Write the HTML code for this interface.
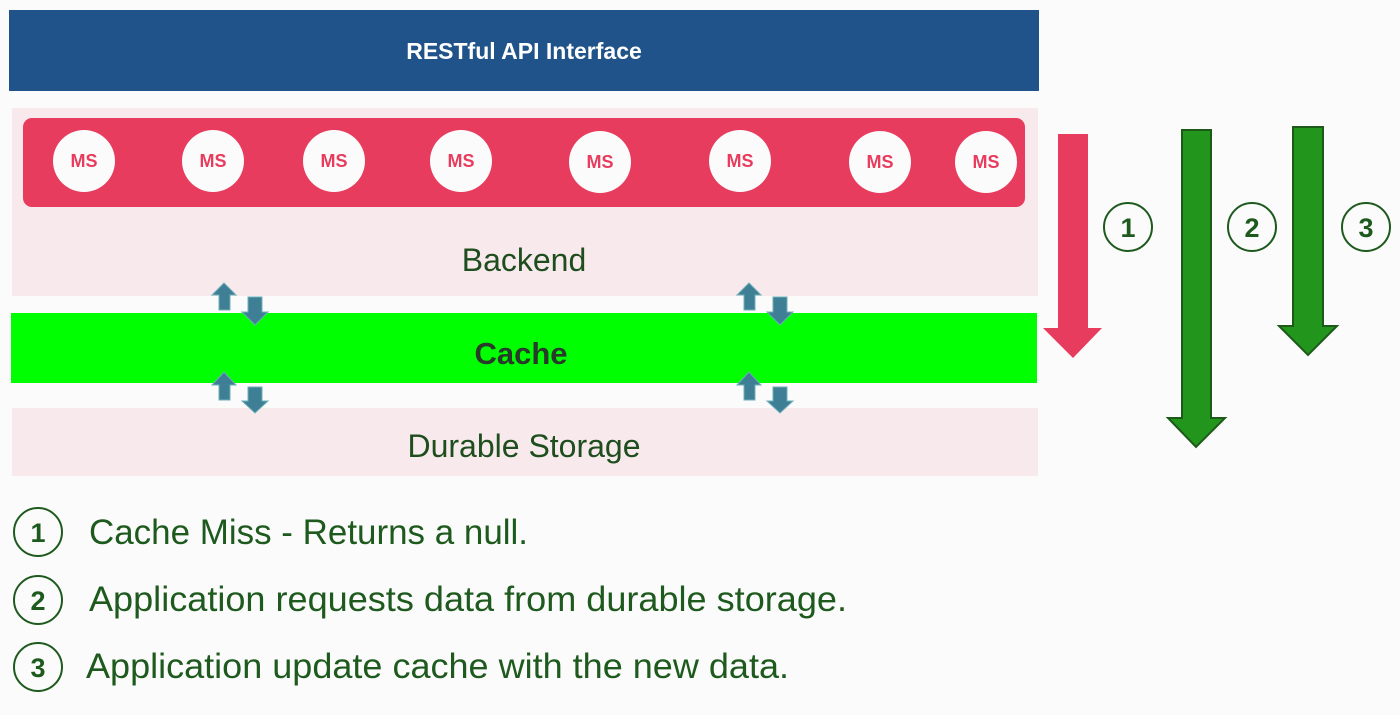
<!DOCTYPE html>
<html><head><meta charset="utf-8"><style>
html,body{margin:0;padding:0;background:#fbfbfb;}
svg{display:block}
</style></head><body>
<svg width="1400" height="715" viewBox="0 0 1400 715" xmlns="http://www.w3.org/2000/svg" font-family="'Liberation Sans',sans-serif">
<rect width="1400" height="715" fill="#fbfbfb"/>
<rect x="12" y="108" width="1026" height="188" fill="#f8e9ec"/>
<rect x="12" y="408" width="1026" height="68" fill="#f8e9ec"/>
<rect x="9" y="10" width="1030" height="81" fill="#1f538a"/>
<text x="524" y="59" text-anchor="middle" fill="#fff" font-size="23" font-weight="bold">RESTful API Interface</text>
<rect x="23" y="118" width="1002" height="89" rx="9" fill="#e83c5e"/>
<g fill="#fbfbfb">
<circle cx="84" cy="161" r="31"/><circle cx="213" cy="161" r="31"/><circle cx="334" cy="161" r="31"/><circle cx="461" cy="161" r="31"/><circle cx="600" cy="162" r="31"/><circle cx="740" cy="161" r="31"/><circle cx="880" cy="162" r="31"/><circle cx="986" cy="162" r="31"/>
</g>
<g fill="#e83c5e" font-size="18" font-weight="bold" text-anchor="middle">
<text x="84" y="167">MS</text><text x="213" y="167">MS</text><text x="334" y="167">MS</text><text x="461" y="167">MS</text><text x="600" y="168">MS</text><text x="740" y="167">MS</text><text x="880" y="168">MS</text><text x="986" y="168">MS</text>
</g>
<text x="524" y="271" text-anchor="middle" fill="#1e4d1e" font-size="32">Backend</text>
<rect x="11" y="313" width="1026" height="70" fill="#00ff00"/>
<text x="521" y="364" text-anchor="middle" fill="#2a3a2a" font-size="31" font-weight="bold">Cache</text>
<text x="524" y="457" text-anchor="middle" fill="#1e4d1e" font-size="32">Durable Storage</text>
<g fill="#3f7f95" stroke="#6cb0b8" stroke-width="1">
<path d="M219 310V295H212L224 283L236 295H230V310Z"/>
<path d="M248 297H262V312H268L255 325L242 312H248Z"/>
<path d="M219 400V385H212L224 372L236 385H230V400Z"/>
<path d="M248 387H262V401H268L255 413L242 401H248Z"/>
<path d="M744 310V295H737L749 283L761 295H755V310Z"/>
<path d="M773 297H787V312H793L780 325L767 312H773Z"/>
<path d="M744 400V385H737L749 372L761 385H755V400Z"/>
<path d="M773 387H787V401H793L780 413L767 401H773Z"/>
</g>
<path d="M1058 134H1088V328H1102L1073 358L1043 328H1058Z" fill="#e83c5e"/>
<path d="M1182 130H1211V418H1225L1196 447L1168 418H1182Z" fill="#22961c" stroke="#1d5a1a" stroke-width="2"/>
<path d="M1293 127H1323V326H1337L1308 355L1279 326H1293Z" fill="#22961c" stroke="#1d5a1a" stroke-width="2"/>
<g fill="none" stroke="#1e5a1e" stroke-width="2">
<circle cx="1128" cy="227" r="24"/><circle cx="1252" cy="227" r="24"/><circle cx="1366" cy="227" r="24"/>
<circle cx="38" cy="532" r="24"/><circle cx="38" cy="600" r="24"/><circle cx="38" cy="667" r="24"/>
</g>
<g fill="#1e5a1e" font-size="27" font-weight="bold" text-anchor="middle">
<text x="1128" y="237">1</text><text x="1252" y="237">2</text><text x="1366" y="237">3</text>
<text x="38" y="542">1</text><text x="38" y="610">2</text><text x="38" y="677">3</text>
</g>
<g fill="#1e5a1e" font-size="35">
<text x="89" y="544" textLength="439" lengthAdjust="spacingAndGlyphs">Cache Miss - Returns a null.</text>
<text x="89" y="611" textLength="758" lengthAdjust="spacingAndGlyphs">Application requests data from durable storage.</text>
<text x="86" y="678" textLength="703" lengthAdjust="spacingAndGlyphs">Application update cache with the new data.</text>
</g>
</svg>
</body></html>
